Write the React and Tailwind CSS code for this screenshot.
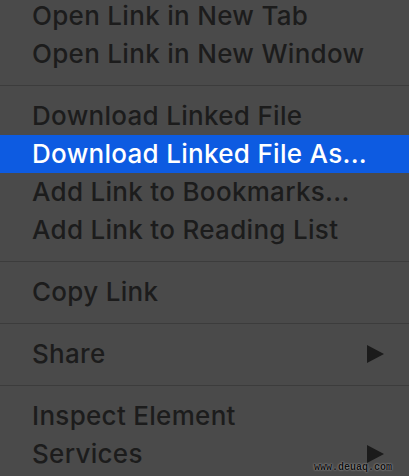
import React from 'react'

const menu = [
  { label: 'Open Link in New Tab' },
  { label: 'Open Link in New Window' },
  { sep: true },
  { label: 'Download Linked File' },
  { label: 'Download Linked File As...', active: true },
  { label: 'Add Link to Bookmarks...' },
  { label: 'Add Link to Reading List' },
  { sep: true },
  { label: 'Copy Link' },
  { sep: true },
  { label: 'Share', submenu: true },
  { sep: true },
  { label: 'Inspect Element' },
  { label: 'Services', submenu: true },
]

// Small filled triangle used for submenu entries
function SubmenuArrow({ active }) {
  return (
    <svg width="17" height="18" viewBox="0 0 17 18" className={active ? 'fill-white' : 'fill-[#1b1b1b]'}>
      <path d="M0 0 L17 9 L0 18 Z" />
    </svg>
  )
}

function MenuItem({ item }) {
  return (
    <div
      className={
        'flex items-center justify-between h-[38px] pl-[32px] pr-[25px] text-[26px] leading-[38px] font-medium tracking-[0.3px] whitespace-nowrap ' +
        (item.active ? 'bg-[#0d5be1] text-white' : 'text-[#1c1c1c]')
      }
    >
      <span>{item.label}</span>
      {item.submenu && <SubmenuArrow active={item.active} />}
    </div>
  )
}

function Separator() {
  return (
    <div className="h-[24px] flex items-center">
      <div className="w-full h-px bg-[#3c3c3c]" />
    </div>
  )
}

export default function App() {
  return (
    <div className="relative w-[409px] h-[476px] overflow-hidden bg-[#4a4a4a] font-['Inter',sans-serif]">
      <div className="flex flex-col -mt-[3px]">
        {menu.map((item, i) =>
          item.sep ? <Separator key={i} /> : <MenuItem key={i} item={item} />
        )}
      </div>

      {/* watermark */}
      <div className="absolute right-[17px] bottom-[3px] text-[10px] leading-none font-bold text-[#111] font-['Liberation_Mono',monospace] [text-shadow:0_0_2px_rgba(255,255,255,0.7)]">
        www.deuaq.com
      </div>
    </div>
  )
}
